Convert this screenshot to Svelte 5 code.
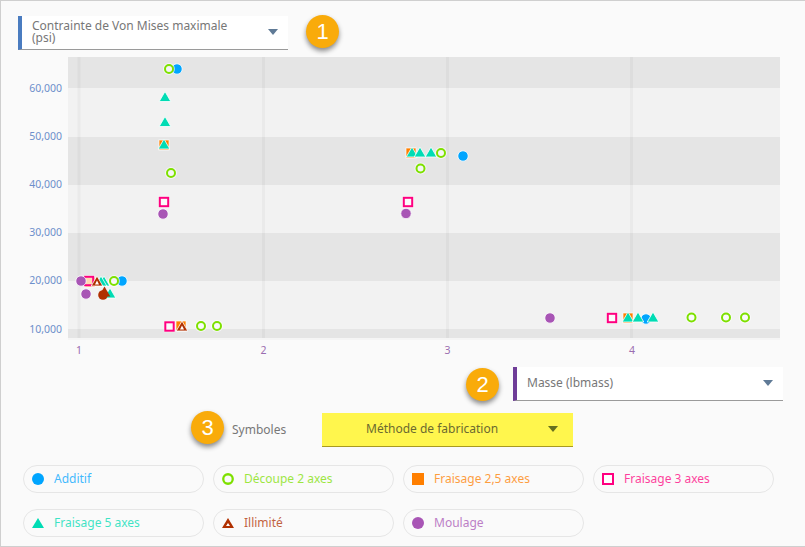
<script>
  const bands = [[57, 31, 1], [88, 49, 0], [137, 48, 1], [185, 48, 0], [233, 48, 1], [281, 48, 0], [329, 9, 1]];
  const gridX = [79, 263.5, 447.5, 631.5];
  const yTicks = [['60,000', 92], ['50,000', 140], ['40,000', 188], ['30,000', 236], ['20,000', 284], ['10,000', 333]];
  const xTicks = [['1', 79], ['2', 263.5], ['3', 447.5], ['4', 632]];
  const additif = [[177, 69], [463, 156], [122, 281], [646, 319]];
  const orange = [[164, 145], [411, 153], [628, 318], [181, 326], [90, 282]];
  const teal = [[165, 96.5], [165, 121.5], [164, 144], [412, 152], [420, 152], [431, 152], [628, 317], [638, 317], [653, 317], [104, 281], [110, 293], [101, 281]];
  const green = [[169, 69], [171, 173], [441, 153], [420.5, 168.5], [201, 326], [217, 326], [114, 281], [691.5, 317.5], [726, 317.5], [745, 317.5]];
  const pink = [[164, 202], [408, 202], [612, 318], [169.5, 326.5], [89, 281]];
  const brown = [[182, 326], [97, 281]];
  const purple = [[163, 214], [406, 213.5], [550, 318], [81, 281], [86, 294]];
  const tri = (x, y, w = 5.8, h = 5) => `${x},${y - h} ${x + w},${y + h} ${x - w},${y + h}`;
  const legend = [
    { label: 'Additif', color: '#00a5ff', kind: 'circle' },
    { label: 'Découpe 2 axes', color: '#7ee000', kind: 'ring' },
    { label: 'Fraisage 2,5 axes', color: '#ff7f00', kind: 'square' },
    { label: 'Fraisage 3 axes', color: '#ff0080', kind: 'box' },
    { label: 'Fraisage 5 axes', color: '#00dcb4', kind: 'tri' },
    { label: 'Illimité', color: '#b03000', kind: 'hollowtri' },
    { label: 'Moulage', color: '#a855b5', kind: 'circle' }
  ];
</script>

<div class="page">
  <div class="row first">
    <div class="select blue">
      <span class="value">Contrainte de Von Mises maximale (psi)</span>
      <span class="arrow"></span>
    </div>
    <span class="badge">1</span>
  </div>

  <svg class="chart" viewBox="1 57 804 310" width="804" height="310" role="img" aria-label="Nuage de points">
    {#each bands as [y, h, dark]}
      <rect x="68" {y} width="712" height={h} fill={dark ? '#e5e5e5' : '#f2f2f2'} />
    {/each}
    <rect x="68" y="338" width="712" height="2" fill="#f5f5f5" />
    {#each gridX as x}
      <rect x={x - 1.5} y="57" width="3" height="281" fill="#000" opacity="0.03" />
    {/each}
    {#each yTicks as [t, y]}
      <text class="ytick" x="62" {y} text-anchor="end">{t}</text>
    {/each}
    {#each xTicks as [t, x]}
      <text class="xtick" {x} y="354" text-anchor="middle">{t}</text>
    {/each}

    {#each additif as [x, y]}
      <circle cx={x} cy={y} r="5.2" fill="#00a5ff" stroke="#fff" stroke-opacity="0.8" />
    {/each}
    {#each orange as [x, y]}
      <rect x={x - 5} y={y - 5} width="10" height="10" fill="#ff7f00" stroke="#fff" stroke-opacity="0.7" />
    {/each}
    {#each teal as [x, y]}
      <polygon points={tri(x, y)} fill="#00dcb4" stroke="#fff" stroke-opacity="0.8" />
    {/each}
    {#each green as [x, y]}
      <circle cx={x} cy={y} r="6" fill="#fff" fill-opacity="0.6" />
      <circle cx={x} cy={y} r="4" fill="none" stroke="#7ee000" stroke-width="2" />
    {/each}
    {#each pink as [x, y]}
      <rect x={x - 5.7} y={y - 5.7} width="11.4" height="11.4" fill="#fff" fill-opacity="0.7" />
      <rect x={x - 4.2} y={y - 4.2} width="8.4" height="8.4" fill="none" stroke="#ff0080" stroke-width="2" />
    {/each}
    {#each brown as [x, y]}
      <polygon points={tri(x, y)} fill="#b03000" stroke="#fff" stroke-opacity="0.8" />
      <polygon points={tri(x, y + 1.5, 2, 2)} fill="#fff" />
    {/each}
    {#each purple as [x, y]}
      <circle cx={x} cy={y} r="5.2" fill="#a855b5" stroke="#fff" stroke-opacity="0.8" />
    {/each}
    <circle cx="103" cy="295" r="4.8" fill="#b03000" />
    <polygon points={tri(104.5, 291.5)} fill="#b03000" />
  </svg>

  <div class="row second">
    <span class="badge">2</span>
    <div class="select purple">
      <span class="value">Masse (lbmass)</span>
      <span class="arrow"></span>
    </div>
  </div>

  <div class="row third">
    <span class="badge">3</span>
    <span class="symbols">Symboles</span>
    <div class="select yellow">
      <span class="value">Méthode de fabrication</span>
      <span class="arrow"></span>
    </div>
  </div>

  <ul class="legend">
    {#each legend as item}
      <li class="pill" style:color={item.color}>
        <svg class="marker" viewBox="0 0 12 12" width="12" height="12" aria-hidden="true">
          {#if item.kind === 'circle'}
            <circle cx="6" cy="6" r="6" fill="currentColor" />
          {:else if item.kind === 'ring'}
            <circle cx="6" cy="6" r="4.75" fill="none" stroke="currentColor" stroke-width="2.3" />
          {:else if item.kind === 'square'}
            <rect width="12" height="12" fill="currentColor" />
          {:else if item.kind === 'box'}
            <rect x="1" y="1" width="10" height="10" fill="#fff" stroke="currentColor" stroke-width="2" />
          {:else if item.kind === 'tri'}
            <polygon points="6,1 12,11 0,11" fill="currentColor" />
          {:else}
            <polygon points="6,1 12,11 0,11" fill="currentColor" />
            <polygon points="6,6 8,9 4,9" fill="#fff" />
          {/if}
        </svg>
        <span class="label">{item.label}</span>
      </li>
    {/each}
  </ul>
</div>

<style>
  :global(body) {
    margin: 0;
  }
  .page {
    box-sizing: border-box;
    width: 805px;
    height: 547px;
    overflow: hidden;
    background: #fafafa;
    border-top: 1px solid #cfcfcf;
    border-left: 1px solid #cfcfcf;
    border-bottom: 1px solid #cfcfcf;
    font-family: "Noto Sans", sans-serif;
    font-size: 12px;
    color: #777;
  }
  .row {
    display: flex;
    align-items: center;
  }
  .first {
    height: 34px;
    padding: 15px 0 7px 17px;
    gap: 18px;
  }
  .first .badge {
    margin-top: -3px;
  }
  .second {
    justify-content: flex-end;
    padding-right: 22px;
    gap: 14px;
  }
  .third {
    margin-top: 12px;
    padding-left: 190px;
  }
  .third .badge {
    margin-top: -5px;
    margin-right: 8px;
  }
  .select {
    box-sizing: border-box;
    width: 270px;
    height: 34px;
    display: flex;
    align-items: center;
    background: #fff;
    border-bottom: 1px solid #9a9a9a;
    padding: 0 10px;
    line-height: 12px;
  }
  .value {
    flex: 1;
    padding-right: 34px;
    margin-bottom: 2px;
  }
  .blue {
    border-left: 4px solid #4a7cc0;
  }
  .purple {
    border-left: 4px solid #6f3d98;
  }
  .yellow {
    width: 251px;
    margin-left: 35px;
    background: #fff64d;
    border-bottom-color: #a89a20;
    color: #6b6930;
    padding: 0 15px 0 44px;
  }
  .yellow .value {
    padding-right: 0;
  }
  .arrow {
    width: 0;
    height: 0;
    margin-bottom: 2px;
    border-left: 5.5px solid transparent;
    border-right: 5.5px solid transparent;
    border-top: 6px solid #5f7a96;
  }
  .yellow .arrow {
    border-top-color: #66701f;
  }
  .badge {
    box-sizing: border-box;
    width: 33px;
    height: 33px;
    flex: none;
    border-radius: 50%;
    background: #f9ab0a;
    color: #fff;
    font-size: 22px;
    line-height: 33px;
    text-align: center;
    box-shadow: 0 3px 5px rgba(0, 0, 0, 0.45);
    font-family: "Liberation Sans", sans-serif;
  }
  .symbols {
    width: 55px;
    margin-bottom: 2px;
  }
  .chart {
    display: block;
  }
  .ytick {
    font-size: 10.5px;
    fill: #6d8fcb;
    font-family: "Noto Sans", sans-serif;
  }
  .xtick {
    font-size: 10.5px;
    fill: #9a6db0;
    font-family: "Noto Sans", sans-serif;
  }
  .legend {
    list-style: none;
    margin: 18px 0 0;
    padding: 0 0 0 22px;
    display: grid;
    grid-template-columns: repeat(4, 181px);
    column-gap: 9px;
    row-gap: 16px;
  }
  .pill {
    box-sizing: border-box;
    height: 28px;
    display: flex;
    align-items: center;
    gap: 10px;
    padding-left: 8px;
    border: 1px solid #e6e6e6;
    border-radius: 14px;
  }
  .marker {
    flex: none;
  }
  .label {
    opacity: 0.75;
    margin-bottom: 2px;
  }
</style>
